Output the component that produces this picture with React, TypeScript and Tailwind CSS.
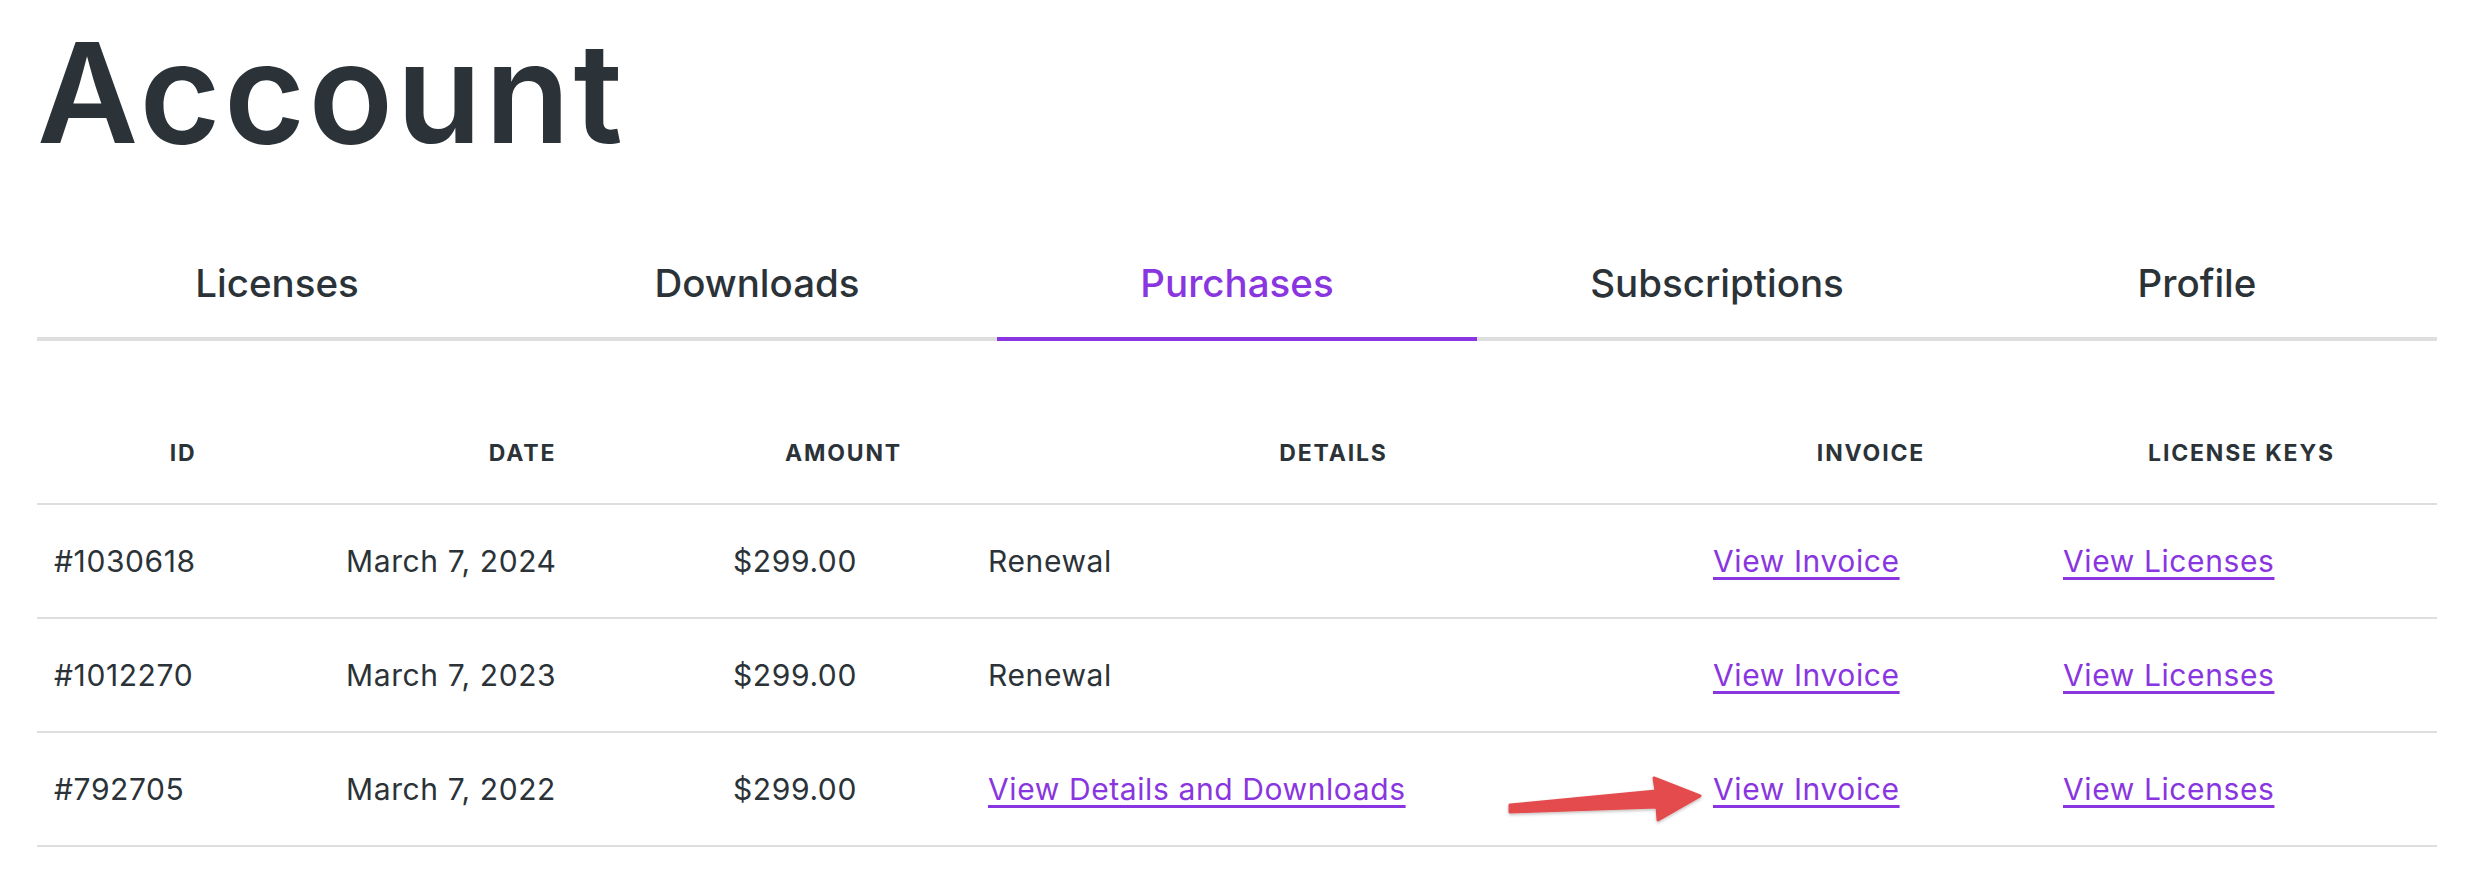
import React from "react";

const cols = [292, 387, 255, 725, 350, 391];
const headers = ["ID", "DATE", "AMOUNT", "DETAILS", "INVOICE", "LICENSE KEYS"];

type Row = { id: string; date: string; amount: string; details: string; detailsLink?: boolean };
const rows: Row[] = [
  { id: "#1030618", date: "March 7, 2024", amount: "$299.00", details: "Renewal" },
  { id: "#1012270", date: "March 7, 2023", amount: "$299.00", details: "Renewal" },
  { id: "#792705", date: "March 7, 2022", amount: "$299.00", details: "View Details and Downloads", detailsLink: true },
];

const tabs = ["Licenses", "Downloads", "Purchases", "Subscriptions", "Profile"];

function Link({ children }: { children: React.ReactNode }) {
  return (
    <a
      href="#"
      className="text-[#8936e0] underline decoration-[3px] underline-offset-[5px]"
    >
      {children}
    </a>
  );
}

export default function App() {
  return (
    <div
      className="relative min-h-[890px] w-full bg-white text-[#2b3338]"
      style={{ fontFamily: "Inter, 'Noto Sans', sans-serif" }}
    >
      <div className="ml-[37px] w-[2400px]">
        <h1 className="pt-[23px] text-[139px] font-semibold leading-none tracking-[0.025em]">
          Account
        </h1>
        <div className="mt-[102px] flex">
          {tabs.map((t) => (
            <div
              key={t}
              className={
                t === "Purchases"
                  ? "flex-1 border-b-4 border-[#8936e0] pb-[34px] text-center text-[38.5px] font-medium leading-none text-[#8936e0]"
                  : "flex-1 border-b-4 border-[#dedede] pb-[34px] text-center text-[38.5px] font-medium leading-none"
              }
            >
              {t}
            </div>
          ))}
        </div>
        <table className="mt-[63px] w-[2400px] table-fixed border-collapse">
          <colgroup>
            {cols.map((w, i) => (
              <col key={i} style={{ width: w }} />
            ))}
          </colgroup>
          <thead>
            <tr>
              {headers.map((h) => (
                <th
                  key={h}
                  className="pt-[38px] pb-[38px] text-center text-[23px] font-bold leading-none tracking-[0.08em]"
                >
                  {h}
                </th>
              ))}
            </tr>
          </thead>
          <tbody>
            {rows.map((r) => (
              <tr key={r.id} className="border-t-2 border-b-2 border-[#dedede]">
                <td className="py-[41px] pl-[17px] text-[30px] leading-none tracking-[0.02em]">{r.id}</td>
                <td className="py-[41px] pl-[17px] text-[30px] leading-none tracking-[0.02em]">{r.date}</td>
                <td className="py-[41px] pl-[17px] text-[30px] leading-none tracking-[0.02em]">{r.amount}</td>
                <td className="py-[41px] pl-[17px] text-[30px] leading-none tracking-[0.02em]">
                  {r.detailsLink ? <Link>{r.details}</Link> : r.details}
                </td>
                <td className="py-[41px] pl-[17px] text-[30px] leading-none tracking-[0.02em]">
                  <Link>View Invoice</Link>
                </td>
                <td className="py-[41px] pl-[17px] text-[30px] leading-none tracking-[0.02em]">
                  <Link>View Licenses</Link>
                </td>
              </tr>
            ))}
          </tbody>
        </table>
      </div>
      <svg
        className="absolute left-[1500px] top-[770px]"
        width="210"
        height="60"
        viewBox="0 0 210 60"
      >
        <defs>
          <filter id="sh" x="-10%" y="-30%" width="120%" height="160%">
            <feDropShadow dx="0" dy="1.5" stdDeviation="1.5" floodColor="#000" floodOpacity="0.25" />
          </filter>
        </defs>
        <polygon
          points="10,35 156,21 154,8 200,26 158,50 157,37 10,42"
          fill="#e44b4e"
          stroke="#e44b4e"
          strokeWidth="3"
          strokeLinejoin="round"
          filter="url(#sh)"
        />
      </svg>
    </div>
  );
}
